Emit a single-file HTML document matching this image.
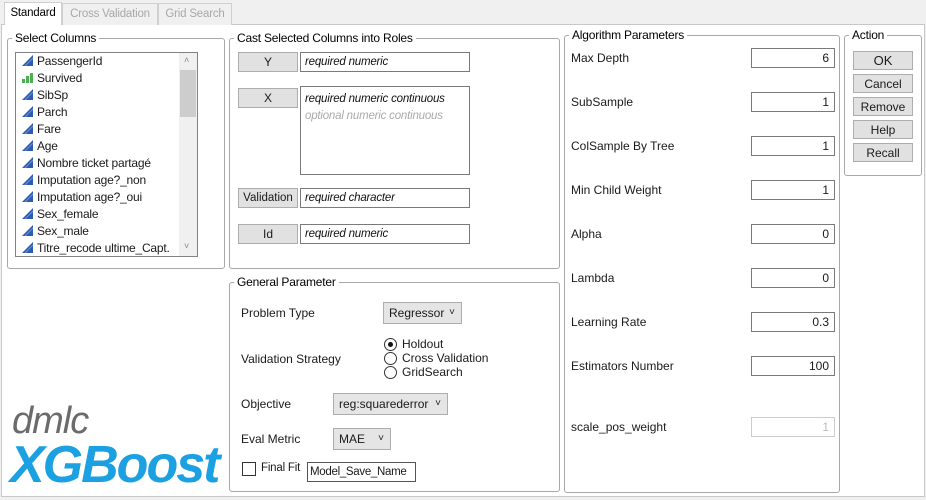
<!DOCTYPE html>
<html><head><style>
*{box-sizing:border-box}
body{margin:0;width:926px;height:500px;background:#f0f0f0;font-family:"Liberation Sans",sans-serif;font-size:12px;color:#1a1a1a;position:relative;overflow:hidden}
.a{position:absolute;white-space:nowrap}
.panel{left:1px;top:24px;width:924px;height:473px;background:#fff;border:1px solid #c8c8c8}
.tab{top:3px;height:22px;border:1px solid #d0d0d0;border-bottom:none;background:#f0f0f0;color:#a8a8a8;padding:4px 0 0;text-align:center;font-size:11.5px;letter-spacing:-0.2px}
.tab.sel{background:#fff;color:#000;top:2px;height:23px;z-index:2}
.grp{border:1px solid #a8a8a8;border-radius:3px}
.gl{background:#fff;padding:0 3px;font-size:12px;color:#000;line-height:14px;letter-spacing:-0.2px}
.btn{background:#e1e1e1;border:1px solid #adadad;text-align:center;line-height:18px;font-size:12px}
.fld{border:1px solid #7a7a7a;background:#fff;font-style:italic;padding:2px 4px;font-size:11.5px;line-height:15px;color:#111;letter-spacing:-0.2px}
.num{border:1px solid #7a7a7a;background:#fff;text-align:right;padding:2px 5px;line-height:14px;height:20px;width:84px;left:751px}
.lab{left:571px}
.li{left:22px;font-size:12px;line-height:17px;height:17px;letter-spacing:-0.2px}
.ic{display:inline-block;width:11px;height:11px;vertical-align:-1px;margin-right:4px}
.dd{background:#e5e5e5;border:1px solid #adadad;height:22px;line-height:20px;padding-left:5px}
.dd:after{content:"˅";position:absolute;right:6px;top:0;font-size:10px}
.rb{width:13px;height:13px;border:1px solid #333;border-radius:50%;background:#fff;left:384px}
</style></head><body>
<div class="a panel"></div>
<div class="a tab sel" style="left:4px;width:58px">Standard</div>
<div class="a tab" style="left:62px;width:96px">Cross Validation</div>
<div class="a tab" style="left:158px;width:74px">Grid Search</div>

<div class="a grp" style="left:7px;top:38px;width:218px;height:231px"></div>
<div class="a gl" style="left:12px;top:31px">Select Columns</div>
<div class="a" style="left:15px;top:52px;width:183px;height:205px;border:1px solid #828282;background:#fff"></div>
<div class="a" style="left:179px;top:53px;width:18px;height:203px;background:#f0f0f0"></div>
<div class="a" style="left:180px;top:70px;width:16px;height:47px;background:#cdcdcd"></div>
<div class="a" style="left:184px;top:55px;font-size:9px;color:#888">˄</div>
<div class="a" style="left:184px;top:241px;font-size:9px;color:#888">˅</div>
<svg width="0" height="0" style="position:absolute"><defs><symbol id="tri" viewBox="0 0 11 11"><path d="M0 11 L11 0 L11 11 Z" fill="#2d5bb0"/><path d="M3 11 L11 3" stroke="#6d93d8" stroke-width="1"/></symbol><symbol id="bar" viewBox="0 0 11 11"><rect x="0" y="7" width="3" height="4" fill="#4caf50"/><rect x="4" y="4" width="3" height="7" fill="#4caf50"/><rect x="8" y="1" width="3" height="10" fill="#4caf50"/></symbol></defs></svg>
<div class="a li" style="top:53px"><svg class="ic"><use href="#tri"/></svg>PassengerId</div>
<div class="a li" style="top:70px"><svg class="ic"><use href="#bar"/></svg>Survived</div>
<div class="a li" style="top:87px"><svg class="ic"><use href="#tri"/></svg>SibSp</div>
<div class="a li" style="top:104px"><svg class="ic"><use href="#tri"/></svg>Parch</div>
<div class="a li" style="top:121px"><svg class="ic"><use href="#tri"/></svg>Fare</div>
<div class="a li" style="top:138px"><svg class="ic"><use href="#tri"/></svg>Age</div>
<div class="a li" style="top:155px"><svg class="ic"><use href="#tri"/></svg>Nombre ticket partagé</div>
<div class="a li" style="top:172px"><svg class="ic"><use href="#tri"/></svg>Imputation age?_non</div>
<div class="a li" style="top:189px"><svg class="ic"><use href="#tri"/></svg>Imputation age?_oui</div>
<div class="a li" style="top:206px"><svg class="ic"><use href="#tri"/></svg>Sex_female</div>
<div class="a li" style="top:223px"><svg class="ic"><use href="#tri"/></svg>Sex_male</div>
<div class="a li" style="top:240px"><svg class="ic"><use href="#tri"/></svg>Titre_recode ultime_Capt.</div>

<div class="a grp" style="left:229px;top:38px;width:331px;height:231px"></div>
<div class="a gl" style="left:234px;top:31px">Cast Selected Columns into Roles</div>
<div class="a btn" style="left:238px;top:52px;width:60px;height:20px">Y</div>
<div class="a fld" style="left:300px;top:52px;width:170px;height:20px">required numeric</div>
<div class="a btn" style="left:238px;top:88px;width:60px;height:20px">X</div>
<div class="a fld" style="left:300px;top:86px;width:170px;height:89px;padding-top:4px;line-height:17px">required numeric continuous<br><span style="color:#aaa">optional numeric continuous</span></div>
<div class="a btn" style="left:238px;top:188px;width:60px;height:20px;font-size:11.5px">Validation</div>
<div class="a fld" style="left:300px;top:188px;width:170px;height:20px">required character</div>
<div class="a btn" style="left:238px;top:224px;width:60px;height:20px">Id</div>
<div class="a fld" style="left:300px;top:224px;width:170px;height:20px">required numeric</div>

<div class="a grp" style="left:229px;top:282px;width:331px;height:210px"></div>
<div class="a gl" style="left:234px;top:275px">General Parameter</div>
<div class="a" style="left:241px;top:306px">Problem Type</div>
<div class="a dd" style="left:383px;top:302px;width:79px">Regressor</div>
<div class="a" style="left:241px;top:352px">Validation Strategy</div>
<div class="a rb" style="top:338px"></div><div class="a" style="left:388px;top:342px;width:5px;height:5px;border-radius:50%;background:#111"></div>
<div class="a" style="left:402px;top:337px">Holdout</div>
<div class="a rb" style="top:352px"></div><div class="a" style="left:402px;top:351px">Cross Validation</div>
<div class="a rb" style="top:366px"></div><div class="a" style="left:402px;top:365px">GridSearch</div>
<div class="a" style="left:241px;top:397px">Objective</div>
<div class="a dd" style="left:333px;top:393px;width:115px">reg:squarederror</div>
<div class="a" style="left:241px;top:432px">Eval Metric</div>
<div class="a dd" style="left:333px;top:428px;width:58px">MAE</div>
<div class="a" style="left:242px;top:462px;width:14px;height:14px;border:1px solid #333;background:#fff"></div>
<div class="a" style="left:261px;top:462px;font-size:11.5px;letter-spacing:-0.2px">Final Fit</div>
<div class="a" style="left:307px;top:462px;width:109px;height:20px;border:1px solid #555;background:#fff;padding:2px 2px;line-height:14px;font-size:11.5px;letter-spacing:-0.3px;overflow:hidden">Model_Save_Name</div>

<div class="a grp" style="left:564px;top:35px;width:276px;height:458px"></div>
<div class="a gl" style="left:569px;top:28px">Algorithm Parameters</div>
<div class="a lab" style="top:51px">Max Depth</div><div class="a num" style="top:48px">6</div>
<div class="a lab" style="top:95px">SubSample</div><div class="a num" style="top:92px">1</div>
<div class="a lab" style="top:139px">ColSample By Tree</div><div class="a num" style="top:136px">1</div>
<div class="a lab" style="top:183px">Min Child Weight</div><div class="a num" style="top:180px">1</div>
<div class="a lab" style="top:227px">Alpha</div><div class="a num" style="top:224px">0</div>
<div class="a lab" style="top:271px">Lambda</div><div class="a num" style="top:268px">0</div>
<div class="a lab" style="top:315px">Learning Rate</div><div class="a num" style="top:312px">0.3</div>
<div class="a lab" style="top:359px">Estimators Number</div><div class="a num" style="top:356px">100</div>
<div class="a lab" style="top:420px">scale_pos_weight</div><div class="a num" style="top:417px;border-color:#ccc;color:#bbb">1</div>

<div class="a grp" style="left:844px;top:35px;width:78px;height:141px"></div>
<div class="a gl" style="left:849px;top:28px">Action</div>
<div class="a btn" style="left:853px;top:51px;width:60px;height:19px;font-size:13px">OK</div>
<div class="a btn" style="left:853px;top:74px;width:60px;height:19px">Cancel</div>
<div class="a btn" style="left:853px;top:97px;width:60px;height:19px">Remove</div>
<div class="a btn" style="left:853px;top:120px;width:60px;height:19px">Help</div>
<div class="a btn" style="left:853px;top:143px;width:60px;height:19px">Recall</div>

<div class="a" style="left:12px;top:400px;font-size:38px;font-style:italic;color:#6b6b6b;letter-spacing:-1px;line-height:42px">dmlc</div>
<div class="a" style="left:10px;top:436px;font-size:52px;font-style:italic;font-weight:bold;color:#1ba1e2;letter-spacing:-2px;line-height:58px">XGBoost</div>
</body></html>
